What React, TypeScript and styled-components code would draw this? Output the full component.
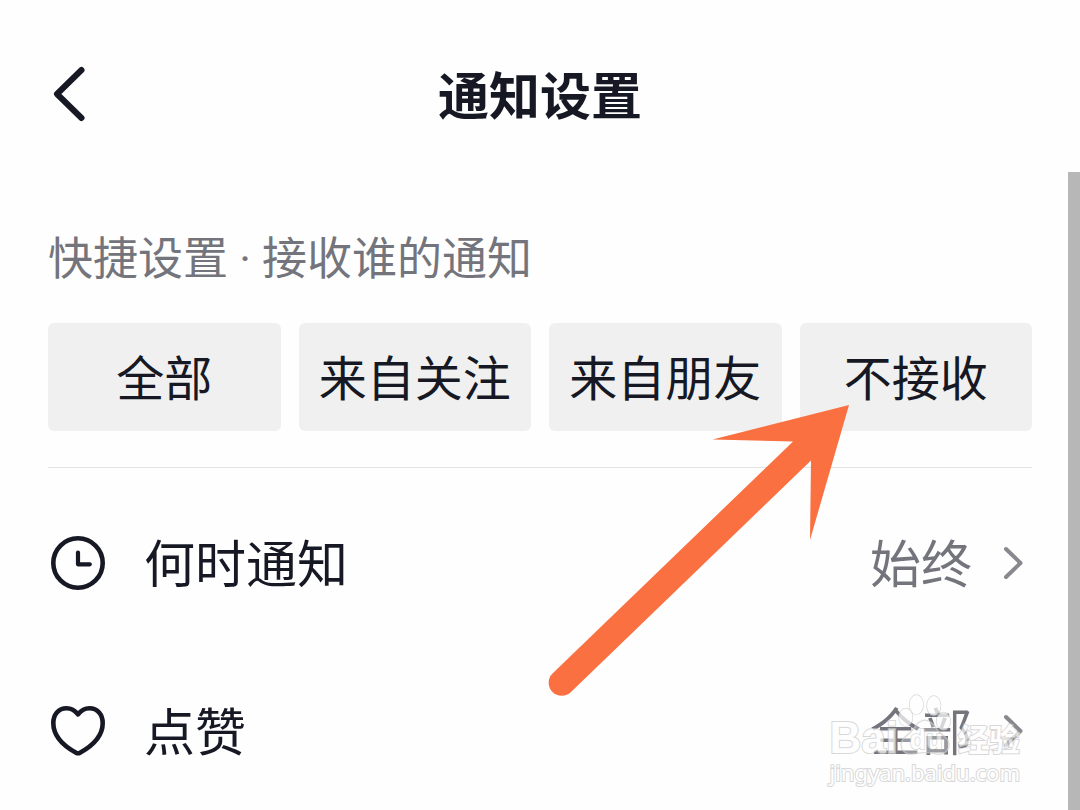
import React from 'react';
import styled, { createGlobalStyle } from 'styled-components';

const ink = '#161823';
const muted = '#74757c';

const GlobalStyle = createGlobalStyle`
  * { box-sizing: border-box; }
  body {
    margin: 0;
    background: #fefefe;
    color: ${ink};
    font-family: 'Noto Sans CJK SC', sans-serif;
  }
  button { font: inherit; color: inherit; border: 0; margin: 0; padding: 0; cursor: pointer; }
`;

const Page = styled.div`
  position: relative;
  display: flex;
  flex-direction: column;
  height: 100vh;
  overflow: hidden;
`;

const Header = styled.header`
  display: grid;
  grid-template-columns: 1fr auto 1fr;
  align-items: center;
  flex: none;
  height: 172px;
  padding: 16px 48px 0;
`;

const BackButton = styled.button`
  display: flex;
  justify-self: start;
  background: none;
`;

const Title = styled.h1`
  margin: 0;
  padding-bottom: 2px;
  font-size: 51px;
  line-height: 72px;
  font-weight: 700;
`;

const Body = styled.div`
  display: flex;
  flex: 1;
  min-height: 0;
`;

const Content = styled.main`
  flex: 1;
  min-width: 0;
  padding: 56px 36px 0 48px;
`;

const ScrollThumb = styled.div`
  flex: none;
  width: 12px;
  background: #b7b7b7;
`;

const SectionLabel = styled.h2`
  margin: 0 0 31px;
  font-family: Roboto, 'Noto Sans CJK SC', sans-serif;
  font-size: 45px;
  line-height: 64px;
  font-weight: 400;
  color: ${muted};
`;

const Options = styled.div`
  display: grid;
  grid-template-columns: repeat(4, 1fr);
  gap: 18px;
  padding-bottom: 36px;
  border-bottom: 1px solid #e3e3e4;
`;

const Option = styled.button`
  height: 108px;
  padding-bottom: 4px;
  border-radius: 6px;
  background: #f0f0f0;
  font-size: 48px;
  line-height: 72px;
  white-space: nowrap;
`;

const List = styled.ul`
  list-style: none;
  margin: 0;
  padding: 11px 0 0;
`;

const Row = styled.button`
  display: flex;
  align-items: center;
  width: 100%;
  height: 168px;
  background: none;
  font-size: 51px;
  line-height: 72px;
`;

const RowLabel = styled.span`
  flex: 1;
  margin-left: 36px;
  padding-bottom: 4px;
  text-align: left;
`;

const RowValue = styled.span`
  margin-right: 20px;
  padding-bottom: 4px;
  color: ${muted};
`;

const Icon = styled.svg`
  flex: none;
  display: block;
  fill: none;
  stroke: currentColor;
  stroke-linecap: round;
  stroke-linejoin: round;
`;

const Chevron = styled(Icon)`
  color: #88898e;
`;

const Arrow = styled.svg`
  position: absolute;
  left: 546px;
  top: 402px;
  pointer-events: none;
`;

const Watermark = styled.div`
  position: absolute;
  right: 60px;
  bottom: 24px;
  opacity: 0.7;
  color: #fff;
  pointer-events: none;
  -webkit-text-stroke: 2px #c8c8c8;
  paint-order: stroke fill;
`;

const Brand = styled.div`
  display: flex;
  align-items: flex-end;
  height: 64px;
  font-size: 31px;
  line-height: 40px;
  font-weight: 700;
`;

const Latin = styled.span`
  font-family: 'Liberation Sans', sans-serif;
  font-size: 44px;
`;

const Paw = styled.svg`
  width: 60px;
  height: 64px;
  flex: none;
  fill: #fff;
  stroke: #c8c8c8;
`;

const PawText = styled.text`
  font-family: 'Liberation Sans', sans-serif;
  font-size: 28px;
  fill: #fff;
`;

const Site = styled.div`
  font-family: 'Noto Sans', sans-serif;
  font-size: 22px;
  line-height: 28px;
`;

const ClockIcon = () => (
  <Icon width="60" height="60" viewBox="0 0 60 60" strokeWidth="4.6" aria-hidden="true">
    <circle cx="30" cy="30" r="24.7" />
    <path d="M30 19.5V31.3H41.8" strokeWidth="4.2" />
  </Icon>
);

const HeartIcon = () => (
  <Icon width="60" height="60" viewBox="0 0 60 60" strokeWidth="4.6" aria-hidden="true">
    <path d="M30 13.400C26.500 8.800 22.500 7.200 18.500 7.200C10.500 7.200 5.300 13.500 5.300 22C5.300 33 13 43.500 28 51.700Q30 52.800 32 51.700C47 43.500 54.700 33 54.700 22C54.700 13.500 49.500 7.200 41.500 7.200C37.500 7.200 33.500 8.800 30 13.400Z" />
  </Icon>
);

const rows = [
  { label: '何时通知', value: '始终', Glyph: ClockIcon },
  { label: '点赞', value: '全部', Glyph: HeartIcon },
];

export default function App() {
  return (
    <>
      <GlobalStyle />
      <Page>
        <Header>
          <BackButton aria-label="返回">
            <Icon width="42" height="60" viewBox="0 0 42 60" strokeWidth="6" aria-hidden="true">
              <path d="M33.500 6L9 30L33.500 54" />
            </Icon>
          </BackButton>
          <Title>通知设置</Title>
        </Header>
        <Body>
          <Content>
            <SectionLabel>快捷设置 · 接收谁的通知</SectionLabel>
            <Options>
              {['全部', '来自关注', '来自朋友', '不接收'].map((name) => (
                <Option key={name}>{name}</Option>
              ))}
            </Options>
            <List>
              {rows.map(({ label, value, Glyph }) => (
                <li key={label}>
                  <Row>
                    <Glyph />
                    <RowLabel>{label}</RowLabel>
                    <RowValue>{value}</RowValue>
                    <Chevron width="40" height="40" viewBox="0 0 40 40" strokeWidth="4" aria-hidden="true">
                      <path d="M14 6L28.500 20L14 34" />
                    </Chevron>
                  </Row>
                </li>
              ))}
            </List>
          </Content>
          <ScrollThumb />
        </Body>
        <Arrow width="306" height="300" viewBox="546 402 306 300" aria-hidden="true">
          <path
            fill="#fa7040"
            d="M849 405L712.500 439.500L793 441.500L552.500 673.500A12.800 12.800 0 0 0 571 692L811 460.500L810 540Z"
          />
        </Arrow>
        <Watermark aria-hidden="true">
          <Brand>
            <Latin>Bai</Latin>
            <Paw viewBox="0 0 62 66" strokeWidth="1.5">
              <ellipse cx="19" cy="11" rx="7" ry="10" />
              <ellipse cx="37" cy="12" rx="7" ry="10" />
              <ellipse cx="8" cy="24" rx="7" ry="9" />
              <ellipse cx="47" cy="28" rx="7" ry="9" />
              <path
                fillOpacity="0.4"
                d="M28 27C19 27 17 38 9 43C-1 50 3 63 15 62Q28 59 41 62C53 63 57 50 47 43C39 38 37 27 28 27Z"
              />
              <PawText x="12" y="57">du</PawText>
            </Paw>
            <span>经验</span>
          </Brand>
          <Site>jingyan.baidu.com</Site>
        </Watermark>
      </Page>
    </>
  );
}
